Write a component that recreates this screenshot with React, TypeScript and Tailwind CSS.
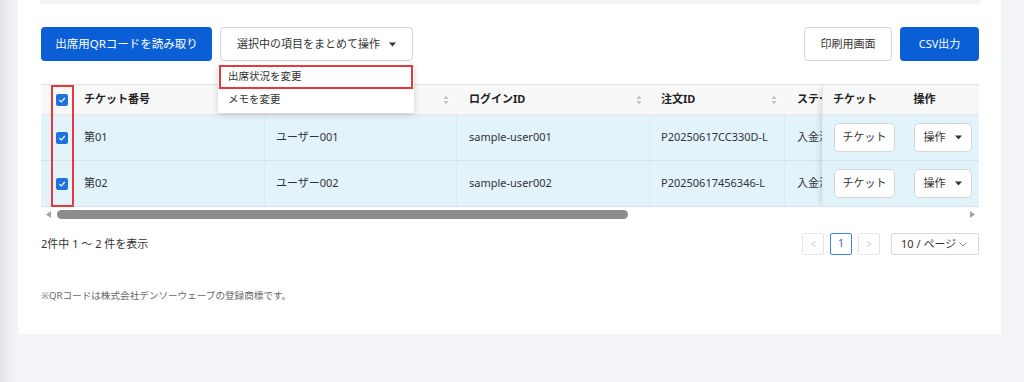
const font = { fontFamily: '"Noto Sans", "Noto Sans CJK JP", sans-serif' };

const SortIcon = () => (
  <svg width="6" height="10" viewBox="0 0 6 10" className="shrink-0">
    <path d="M3 0.5 L5.5 4 L0.5 4 Z" fill="#c4c4c4" />
    <path d="M3 9.5 L5.5 6 L0.5 6 Z" fill="#c4c4c4" />
  </svg>
);

const Check = () => (
  <div className="w-[12px] h-[12px] rounded-[2px] bg-[#1f73de] flex items-center justify-center">
    <svg width="8" height="8" viewBox="0 0 8 8">
      <path d="M1.3 4.1 L3.3 6 L6.8 2" stroke="white" strokeWidth="1.2" fill="none" />
    </svg>
  </div>
);

const Caret = () => (
  <svg width="7" height="5" viewBox="0 0 7 5">
    <path d="M0 0.5 L7 0.5 L3.5 4.5 Z" fill="#333" />
  </svg>
);

const cols = [
  { w: "w-[190px]", pl: "pl-[9px]", label: "チケット番号", sort: true },
  { w: "w-[192px]", pl: "pl-[11px]", label: "ユーザー名", sort: true },
  { w: "w-[193px]", pl: "pl-[12px]", label: "ログインID", sort: true },
  { w: "w-[135px]", pl: "pl-[11px]", label: "注文ID", sort: true },
  { w: "w-[80px]", pl: "pl-[12px]", label: "ステータス", sort: false },
];

const rows = [
  ["第01", "ユーザー001", "sample-user001", "P20250617CC330D-L", "入金済み"],
  ["第02", "ユーザー002", "sample-user002", "P20250617456346-L", "入金済み"],
];

export default function App() {
  return (
    <div className="w-[1024px] h-[382px] bg-[#f3f4f8] flex overflow-hidden" style={font}>
      <div className="w-[18px] h-full bg-gradient-to-r from-[#e2e2e6] via-[#eeeff3] to-[#f3f4f8]" />
      <div className="w-[983px] h-[334px] bg-white px-[23px] pr-[22px] flex flex-col">
        <div className="h-[4px] bg-[#f4f4f6] -mx-[1px]" />

        {/* toolbar */}
        <div className="mt-[23px] flex items-center h-[34px]">
          <button className="h-[34px] w-[171px] rounded-[4px] bg-[#0b5fd6] text-white text-[11.5px]">
            出席用QRコードを読み取り
          </button>
          <div className="relative ml-[8px]">
            <button className="h-[34px] w-[193px] rounded-[4px] border border-[#d4d4d4] bg-white text-[#333] text-[11px] flex items-center justify-center gap-[9px]">
              <span>選択中の項目をまとめて操作</span>
              <Caret />
            </button>
            <div className="absolute left-[-2px] top-[36px] w-[196px] h-[50px] bg-white shadow-[0_2px_6px_rgba(0,0,0,0.18)] z-20 pt-[2px] text-[10.5px] text-[#333]">
              <div className="h-[24px] mx-[1px] border-2 border-[#e8383d] flex items-center pl-[7px]">出席状況を変更</div>
              <div className="h-[22px] flex items-center pl-[10px]">メモを変更</div>
            </div>
          </div>
          <div className="ml-auto flex gap-[8px]">
            <button className="h-[34px] w-[88px] rounded-[4px] border border-[#d4d4d4] bg-white text-[#333] text-[11px]">
              印刷用画面
            </button>
            <button className="h-[34px] w-[79px] rounded-[4px] bg-[#0b5fd6] text-white text-[11px]">
              CSV出力
            </button>
          </div>
        </div>

        {/* table */}
        <div className="mt-[23px] relative">
          <div className="flex border-t border-[#e2e2e2]">
            {/* scroll area */}
            <div className="w-[781px] overflow-hidden">
              <div className="flex h-[30px] bg-[#f8f8f8] border-b border-[#e6e6e6] items-center text-[11px] font-bold text-[#222] w-[900px]">
                <div className="w-[34px] shrink-0 flex justify-center pl-[8px]">
                  <Check />
                </div>
                {cols.map((c) => (
                  <div key={c.label} className={`${c.w} ${c.pl} shrink-0 flex items-center justify-between pr-[8px] whitespace-nowrap`}>
                    <span>{c.label}</span>
                    {c.sort && <SortIcon />}
                  </div>
                ))}
              </div>
              {rows.map((r, i) => (
                <div key={i} className="flex h-[46px] bg-[#e2f3fc] border-b border-[#d3e3ec] items-center text-[11px] text-[#333] w-[900px]">
                  <div className="w-[34px] shrink-0 flex justify-center pl-[8px]">
                    <Check />
                  </div>
                  {r.map((v, j) => (
                    <div key={j} className={`${cols[j].w} ${cols[j].pl} shrink-0 h-full flex items-center whitespace-nowrap border-r border-[#d9ecf6]`}>
                      {v}
                    </div>
                  ))}
                </div>
              ))}
            </div>
            {/* fixed columns */}
            <div className="w-[157px] shrink-0 relative shadow-[-6px_0_6px_-4px_rgba(0,0,0,0.12)] border-l border-[#e4e8ec]">
              <div className="flex h-[30px] bg-[#f8f8f8] border-b border-[#e6e6e6] items-center text-[11px] font-bold text-[#222]">
                <div className="w-[78px] pl-[10px]">チケット</div>
                <div className="w-[79px] pl-[13px]">操作</div>
              </div>
              {rows.map((_, i) => (
                <div key={i} className="flex h-[46px] bg-[#e2f3fc] border-b border-[#d3e3ec] items-center text-[11px] text-[#333]">
                  <div className="w-[78px] pl-[11px]">
                    <div className="w-[61px] h-[29px] rounded-[5px] border border-[#d6d6d6] bg-white flex items-center justify-center">チケット</div>
                  </div>
                  <div className="w-[79px] pl-[13px]">
                    <div className="w-[58px] h-[29px] rounded-[5px] border border-[#d6d6d6] bg-white flex items-center justify-center gap-[9px]">
                      <span>操作</span>
                      <Caret />
                    </div>
                  </div>
                </div>
              ))}
            </div>
          </div>
          {/* scrollbar */}
          <div className="h-[14px] flex items-center">
            <svg width="5" height="7" viewBox="0 0 5 7" className="ml-[5px]">
              <path d="M0 3.5 L5 0 L5 7 Z" fill="#a3a3a3" />
            </svg>
            <div className="ml-[6px] w-[571px] h-[9px] rounded-full bg-[#8c8c8c]" />
            <svg width="5" height="7" viewBox="0 0 5 7" className="ml-auto mr-[4px]">
              <path d="M5 3.5 L0 0 L0 7 Z" fill="#a3a3a3" />
            </svg>
          </div>
          {/* red highlight around checkbox column */}
          <div className="absolute left-[10px] top-[1px] w-[23px] h-[122px] border-2 border-[#e8383d] pointer-events-none" />
        </div>

        {/* footer */}
        <div className="mt-[12px] flex items-center h-[22px]">
          <span className="text-[11px] text-[#333]">2件中 1 〜 2 件を表示</span>
          <div className="ml-auto flex items-center">
            <div className="w-[22px] h-[22px] border border-[#e6e6e6] rounded-[2px] flex items-center justify-center text-[#ccc] text-[10px]">&lt;</div>
            <div className="ml-[6px] w-[22px] h-[22px] border border-[#3d86e6] rounded-[2px] flex items-center justify-center text-[#1f6fd8] text-[10.5px]">1</div>
            <div className="ml-[6px] w-[22px] h-[22px] border border-[#e6e6e6] rounded-[2px] flex items-center justify-center text-[#ccc] text-[10px]">&gt;</div>
            <div className="ml-[11px] w-[88px] h-[22px] border border-[#d9d9d9] rounded-[2px] flex items-center pl-[9px] text-[11px] text-[#333] gap-[3px]">
              <span>10 / ページ</span>
              <svg width="8" height="5" viewBox="0 0 8 5">
                <path d="M0.5 0.5 L4 4 L7.5 0.5" stroke="#888" strokeWidth="1" fill="none" />
              </svg>
            </div>
          </div>
        </div>

        <div className="mt-[34px] text-[9.6px] text-[#666]">※QRコードは株式会社デンソーウェーブの登録商標です。</div>
      </div>
    </div>
  );
}
